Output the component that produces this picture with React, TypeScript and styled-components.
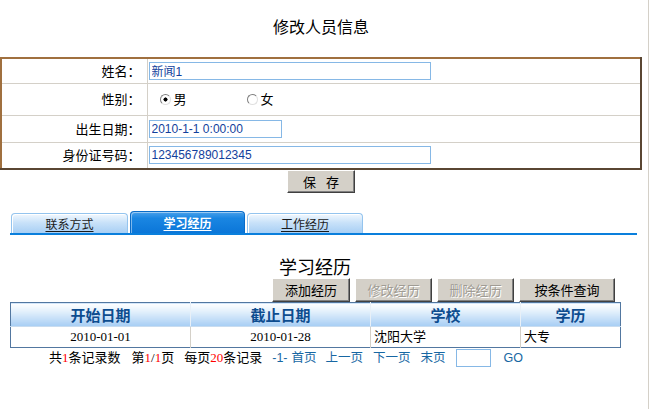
import styled, { createGlobalStyle } from 'styled-components';

const GlobalStyle = createGlobalStyle`
  * { box-sizing: border-box; }
  html, body {
    margin: 0;
    padding: 0;
    background: #ffffff;
  }
  body {
    font-family: "Liberation Serif", "Noto Sans CJK SC", serif;
    font-size: 12px;
    color: #000000;
  }
`;

type Field =
  | { label: string; kind: 'text'; value: string; width: number; height: number }
  | { label: string; kind: 'radio'; height: number };

const fields: Field[] = [
  { label: '姓名：', kind: 'text', value: '新闻1', width: 282, height: 25 },
  { label: '性别：', kind: 'radio', height: 32 },
  { label: '出生日期：', kind: 'text', value: '2010-1-1 0:00:00', width: 133, height: 27 },
  { label: '身份证号码：', kind: 'text', value: '123456789012345', width: 282, height: 27 },
];

const tabs = [
  { label: '联系方式', width: 117, active: false },
  { label: '学习经历', width: 115, active: true },
  { label: '工作经历', width: 116, active: false },
];

const actions = [
  { label: '添加经历', width: 78, disabled: false },
  { label: '修改经历', width: 77, disabled: true },
  { label: '删除经历', width: 77, disabled: true },
  { label: '按条件查询', width: 96, disabled: false },
];

const columns = [
  { title: '开始日期', width: 180 },
  { title: '截止日期', width: 180 },
  { title: '学校', width: 150 },
  { title: '学历', width: 100 },
];

const rows = [{ start: '2010-01-01', end: '2010-01-28', school: '沈阳大学', degree: '大专' }];

const App = () => {
  return (
    <Page>
      <GlobalStyle />
      <Title>修改人员信息</Title>

      <FormTable>
        <tbody>
          {fields.map((field) => (
            <FormRow key={field.label}>
              <LabelCell $h={field.height}>{field.label}</LabelCell>
              <ValueCell $h={field.height}>
                {field.kind === 'text' ? (
                  <TextInput $w={field.width} defaultValue={field.value} />
                ) : (
                  <RadioGroup>
                    <RadioOption>
                      <Radio type="radio" name="sex" defaultChecked />男
                    </RadioOption>
                    <RadioOption>
                      <Radio type="radio" name="sex" />女
                    </RadioOption>
                  </RadioGroup>
                )}
              </ValueCell>
            </FormRow>
          ))}
        </tbody>
      </FormTable>

      <SaveRow>
        <SaveButton>保 存</SaveButton>
      </SaveRow>

      <Lower>
        <TabBar>
          {tabs.map((tab) => (
            <Tab key={tab.label} $active={tab.active} $w={tab.width}>
              <TabLabel $active={tab.active}>{tab.label}</TabLabel>
            </Tab>
          ))}
        </TabBar>

        <SectionTitle>学习经历</SectionTitle>

        <Toolbar>
          {actions.map((action) => (
            <ToolButton key={action.label} $w={action.width} disabled={action.disabled}>
              {action.label}
            </ToolButton>
          ))}
        </Toolbar>

        <Grid>
          <colgroup>
            {columns.map((col) => (
              <col key={col.title} style={{ width: col.width }} />
            ))}
          </colgroup>
          <thead>
            <tr>
              {columns.map((col) => (
                <HeadCell key={col.title}>{col.title}</HeadCell>
              ))}
            </tr>
          </thead>
          <tbody>
            {rows.map((row) => (
              <tr key={row.start}>
                <BodyCell $align="center">{row.start}</BodyCell>
                <BodyCell $align="center">{row.end}</BodyCell>
                <BodyCell $align="left">{row.school}</BodyCell>
                <BodyCell $align="left">{row.degree}</BodyCell>
              </tr>
            ))}
          </tbody>
        </Grid>

        <Pager>
          <PagerText $gap={11}>
            共<Num>1</Num>条记录数
          </PagerText>
          <PagerText $gap={10}>
            第<Num>1</Num>/<Num>1</Num>页
          </PagerText>
          <PagerText $gap={10}>
            每页<Num>20</Num>条记录
          </PagerText>
          <PageLink $gap={4}>-1-</PageLink>
          <PageLink $gap={9}>首页</PageLink>
          <PageLink $gap={10}>上一页</PageLink>
          <PageLink $gap={10}>下一页</PageLink>
          <PageLink $gap={10}>末页</PageLink>
          <PageInput />
          <PageLink $gap={0}>GO</PageLink>
        </Pager>
      </Lower>
    </Page>
  );
};

export default App;

const Page = styled.div`
  width: 649px;
  min-height: 409px;
  border-right: 1px solid #d4d0c8;
`;

const Title = styled.h1`
  margin: 0;
  padding-top: 17px;
  height: 57px;
  font-family: "Noto Sans CJK SC", sans-serif;
  font-size: 16px;
  font-weight: 400;
  line-height: 18px;
  text-align: center;
  padding-right: 6px;
`;

const FormTable = styled.table`
  width: 642px;
  border-collapse: collapse;
  border-style: solid;
  border-width: 2px;
  border-color: #a0703f #5a4632 #5a4632 #a0703f;
`;

const FormRow = styled.tr`
  & + & > td {
    border-top: 1px solid #d4d0c8;
  }
`;

const LabelCell = styled.td<{ $h: number }>`
  width: 146px;
  height: ${(p) => p.$h}px;
  padding: 0 6px 0 0;
  border-right: 1px solid #d4d0c8;
  text-align: right;
  font-family: "Noto Sans CJK SC", sans-serif;
  font-size: 13px;
  line-height: 14px;
  vertical-align: middle;
`;

const ValueCell = styled.td<{ $h: number }>`
  height: ${(p) => p.$h}px;
  padding: 0 0 0 1px;
  vertical-align: middle;
`;

const TextInput = styled.input<{ $w: number }>`
  display: block;
  width: ${(p) => p.$w}px;
  height: 18px;
  margin: 0;
  padding: 0 2px;
  border: 1px solid #86b8e6;
  outline: none;
  font-family: "Liberation Sans", "Noto Sans CJK SC", sans-serif;
  font-size: 12px;
  color: #123f9c;
  background: #ffffff;
`;

const RadioGroup = styled.div`
  display: flex;
  align-items: center;
  padding-left: 11px;
`;

const RadioOption = styled.label`
  display: flex;
  align-items: center;
  width: 87px;
  font-family: "Noto Sans CJK SC", sans-serif;
  font-size: 13px;
  line-height: 14px;
`;

const Radio = styled.input`
  appearance: none;
  width: 11px;
  height: 11px;
  margin: 0 3px 0 0;
  border-radius: 50%;
  border: 1px solid;
  border-color: #808080 #e0e0e0 #e0e0e0 #808080;
  background: #ffffff;

  &:checked {
    background: radial-gradient(circle, #000000 0 1.8px, #ffffff 2.3px);
  }
`;

const SaveRow = styled.div`
  display: flex;
  justify-content: center;
  width: 642px;
`;

const SaveButton = styled.button`
  width: 68px;
  height: 23px;
  padding: 0;
  border: 1px solid;
  border-color: #ffffff #404040 #404040 #ffffff;
  box-shadow: inset -1px -1px 0 #808080;
  background: #d4d0c8;
  font-family: "Noto Sans CJK SC", sans-serif;
  font-size: 13px;
  line-height: 14px;
  word-spacing: 7px;
  color: #000000;
`;

const Lower = styled.div`
  margin: 18px 0 0 10px;
`;

const TabBar = styled.div`
  display: flex;
  align-items: flex-end;
  gap: 2px;
  width: 627px;
  height: 24px;
  padding-left: 1px;
  border-bottom: 2px solid #0a7fdc;
`;

const Tab = styled.div<{ $active: boolean; $w: number }>`
  display: flex;
  align-items: center;
  justify-content: center;
  width: ${(p) => p.$w}px;
  height: ${(p) => (p.$active ? 22 : 20)}px;
  border: 1px solid ${(p) => (p.$active ? '#0a6cc8' : '#94c4ee')};
  border-bottom: none;
  border-radius: 4px 4px 0 0;
  background: ${(p) =>
    p.$active
      ? 'linear-gradient(#4aa0ea, #1a86e2 30%, #0b76d8)'
      : 'linear-gradient(#f2f8fe, #c9e2f9 45%, #a8cff4)'};
  box-shadow: inset 1px 1px 0 ${(p) => (p.$active ? 'rgba(255,255,255,0.45)' : '#ffffff')};
`;

const TabLabel = styled.a<{ $active: boolean }>`
  font-family: "Noto Sans CJK SC", sans-serif;
  font-size: 12px;
  line-height: 14px;
  font-weight: ${(p) => (p.$active ? 700 : 400)};
  color: ${(p) => (p.$active ? '#ffffff' : '#1b1b1b')};
  text-decoration: underline;
  text-underline-offset: 2px;
  margin-top: ${(p) => (p.$active ? 0 : 1)}px;
`;

const SectionTitle = styled.h2`
  width: 610px;
  margin: 21px 0 0;
  font-family: "Noto Sans CJK SC", sans-serif;
  font-size: 18px;
  font-weight: 400;
  line-height: 20px;
  text-align: center;
`;

const Toolbar = styled.div`
  display: flex;
  justify-content: flex-end;
  gap: 5px;
  width: 610px;
  margin-top: 2px;
  padding-right: 5px;
`;

const ToolButton = styled.button<{ $w: number }>`
  width: ${(p) => p.$w}px;
  height: 24px;
  padding: 0;
  border: 1px solid;
  border-color: #ffffff #404040 #404040 #ffffff;
  box-shadow: inset -1px -1px 0 #808080;
  background: #d4d0c8;
  font-family: "Noto Sans CJK SC", sans-serif;
  font-size: 13px;
  line-height: 14px;
  color: #000000;

  &:disabled {
    color: #a09c94;
    text-shadow: 1px 1px 0 #ffffff;
  }
`;

const Grid = styled.table`
  width: 610px;
  table-layout: fixed;
  border-collapse: collapse;
  border: 1px solid #5277a0;
`;

const HeadCell = styled.th`
  height: 24px;
  padding: 0;
  border-right: 1px solid #e8f0f8;
  border-bottom: 1px solid #c8dcf0;
  background: linear-gradient(#ffffff, #e3f0fc 35%, #a6cdf4);
  font-family: "Noto Sans CJK SC", sans-serif;
  font-size: 15px;
  font-weight: 700;
  line-height: 16px;
  color: #0d4c8f;
  text-align: center;

  &:last-child {
    border-right: none;
  }
`;

const BodyCell = styled.td<{ $align: 'left' | 'center' }>`
  height: 21px;
  padding: 0 3px;
  border-right: 1px solid #d4d0c8;
  font-size: 13px;
  line-height: 14px;
  text-align: ${(p) => p.$align};

  &:last-child {
    border-right: none;
  }
`;

const Pager = styled.div`
  display: flex;
  align-items: center;
  height: 18px;
  margin-top: 1px;
  padding-left: 39px;
  font-size: 13px;
  line-height: 14px;
`;

const PagerText = styled.span<{ $gap: number }>`
  margin-right: ${(p) => p.$gap}px;
  white-space: nowrap;
`;

const Num = styled.span`
  color: #ff0000;
`;

const PageLink = styled.a<{ $gap: number }>`
  margin-right: ${(p) => p.$gap}px;
  font-family: "Liberation Sans", "Noto Sans CJK SC", sans-serif;
  font-size: 12.5px;
  color: #1767a3;
  text-decoration: none;
  white-space: nowrap;
`;

const PageInput = styled.input`
  width: 35px;
  height: 18px;
  margin: 0 13px 0 0;
  padding: 0 2px;
  border: 1px solid #86b8e6;
  outline: none;
  background: #ffffff;
`;
